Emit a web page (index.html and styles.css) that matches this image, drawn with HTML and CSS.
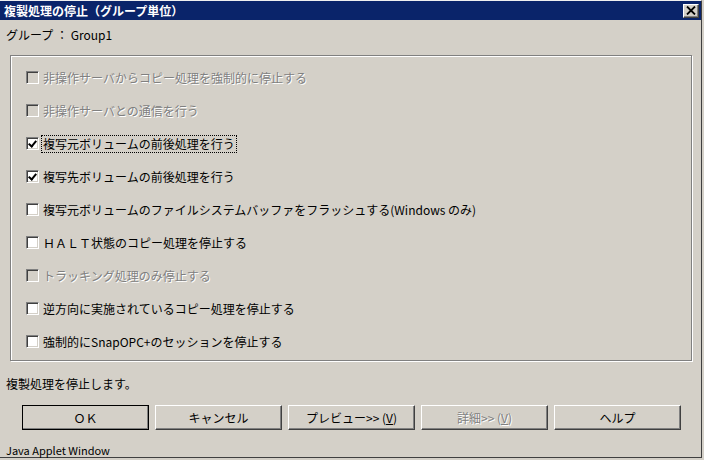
FILE: index.html
```html
<!DOCTYPE html>
<html lang="ja">
<head>
  <meta charset="UTF-8" />
  <title>複製処理の停止（グループ単位）</title>
  <link rel="stylesheet" href="styles.css">
</head>
<body>

  <div class="window">
    <div class="titlebar">
      <span class="title">複製処理の停止（グループ単位）</span>
      <span class="close-btn">
        <svg width="10" height="9" viewBox="0 0 10 9">
          <path d="M1 0.5 L9 8.5 M9 0.5 L1 8.5" stroke="#000" stroke-width="1.8" />
        </svg>
      </span>
    </div>

    <div class="group-line">グループ ： Group1</div>

    <div class="panel">
      <label class="row disabled"><span class="box"></span><span class="text">非操作サーバからコピー処理を強制的に停止する</span></label>
      <label class="row disabled"><span class="box"></span><span class="text">非操作サーバとの通信を行う</span></label>
      <label class="row"><span class="box checked"></span><span class="text focused">複写元ボリュームの前後処理を行う</span></label>
      <label class="row"><span class="box checked"></span><span class="text">複写先ボリュームの前後処理を行う</span></label>
      <label class="row"><span class="box"></span><span class="text">複写元ボリュームのファイルシステムバッファをフラッシュする(Windows のみ)</span></label>
      <label class="row"><span class="box"></span><span class="text">ＨＡＬＴ状態のコピー処理を停止する</span></label>
      <label class="row disabled"><span class="box"></span><span class="text">トラッキング処理のみ停止する</span></label>
      <label class="row"><span class="box"></span><span class="text">逆方向に実施されているコピー処理を停止する</span></label>
      <label class="row"><span class="box"></span><span class="text">強制的にSnapOPC+のセッションを停止する</span></label>
    </div>

    <div class="status">複製処理を停止します。</div>

    <div class="buttons">
      <button class="btn default">ＯＫ</button>
      <button class="btn">キャンセル</button>
      <button class="btn">プレビュー&gt;&gt; (<u>V</u>)</button>
      <button class="btn" disabled>詳細&gt;&gt; (<u>V</u>)</button>
      <button class="btn">ヘルプ</button>
    </div>

    <div class="footer">Java Applet Window</div>
  </div>

  <script>
    // チェックボックスの切り替え
    document.querySelectorAll(".row:not(.disabled)").forEach(function (row) {
      row.addEventListener("click", function () {
        row.querySelector(".box").classList.toggle("checked");
      });
    });
  </script>

</body>
</html>
```

FILE: styles.css
```css
* {
  margin: 0;
  padding: 0;
  box-sizing: border-box;
  font-family: "MS UI Gothic", "Noto Sans CJK JP", sans-serif;
}
body {
  width: 704px;
  height: 460px;
  background: #d4d0c8;
  color: #000;
  font-size: 12px;
  overflow: hidden;
}
.window {
  width: 702px;
  height: 458px;
  border-top: 1px solid #f0f0f0;
  border-right: 1px solid #404040;
  border-bottom: 1px solid #404040;
  background: #d4d0c8;
}
.titlebar {
  height: 19px;
  background: #0a246a;
  display: flex;
  align-items: center;
  justify-content: space-between;
  padding: 0 2px 0 4px;
}
.title {
  color: #fff;
  font-weight: bold;
  font-size: 12px;
}
.close-btn {
  width: 16px;
  height: 14px;
  background: #d4d0c8;
  border-top: 1px solid #fff;
  border-left: 1px solid #fff;
  border-right: 1px solid #404040;
  border-bottom: 1px solid #404040;
  box-shadow: inset -1px -1px 0 #808080;
  display: flex;
  align-items: center;
  justify-content: center;
}
.group-line {
  height: 35px;
  line-height: 30px;
  padding-left: 6px;
}
.panel {
  margin: 0 10px 0 10px;
  width: 682px;
  height: 306px;
  border: 1px solid #808080;
  box-shadow: inset 1px 1px 0 #fff, 1px 1px 0 #fff;
  padding: 5px 0 2px 15px;
}
.row {
  height: 33px;
  display: flex;
  align-items: center;
  gap: 3px;
}
.box {
  width: 13px;
  height: 13px;
  background: #fff;
  border-top: 1px solid #808080;
  border-left: 1px solid #808080;
  border-right: 1px solid #fff;
  border-bottom: 1px solid #fff;
  box-shadow: inset 1px 1px 0 #404040, inset -1px -1px 0 #d4d0c8;
  position: relative;
}
.box.checked::after {
  content: "";
  position: absolute;
  left: 3px;
  top: 1px;
  width: 3px;
  height: 6px;
  border-right: 2px solid #000;
  border-bottom: 2px solid #000;
  transform: rotate(40deg);
}
.row.disabled .box {
  background: #d4d0c8;
}
.text {
  padding: 1px 1px;
  line-height: 14px;
}
.text.focused {
  outline: 1px dotted #000;
}
.row.disabled .text {
  color: #808080;
  text-shadow: 1px 1px 0 #fff;
}
.status {
  height: 44px;
  display: flex;
  align-items: center;
  padding-left: 6px;
}
.buttons {
  display: flex;
  gap: 6px;
  padding-left: 22px;
}
.btn {
  width: 127px;
  height: 25px;
  font-size: 12px;
  background: #d4d0c8;
  color: #000;
  border-top: 1px solid #fff;
  border-left: 1px solid #fff;
  border-right: 1px solid #404040;
  border-bottom: 1px solid #404040;
  box-shadow: inset -1px -1px 0 #808080;
}
.btn.default {
  outline: 1px solid #000;
  outline-offset: -1px;
  border-top-color: #fff;
}
.btn:disabled {
  color: #808080;
  text-shadow: 1px 1px 0 #fff;
}
.btn u {
  text-decoration: underline;
}
.footer {
  height: 27px;
  padding: 13px 0 0 6px;
  line-height: 14px;
  font-size: 11px;
}
```
